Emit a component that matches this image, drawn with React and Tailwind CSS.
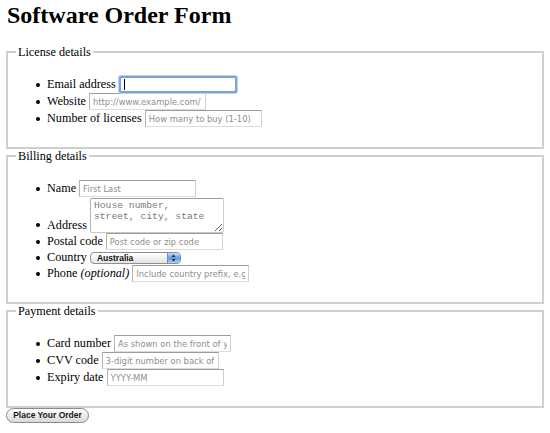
import { useState } from 'react'

const inputCls =
  'w-[117px] h-[17px] ml-[3px] px-[3px] bg-white border border-t-[#9c9c9c] border-l-[#b4b4b4] border-r-[#d0d0d0] border-b-[#dcdcdc] ' +
  "font-['DejaVu_Sans',sans-serif] text-[8.4px] text-black placeholder:text-[#8e8e8e] outline-none"

function Bullet() {
  return <span className="w-[4px] h-[4px] mr-[7px] rounded-full bg-black shrink-0" />
}

function Row({ children, className = 'h-[17px] items-center' }) {
  return (
    <li className={`flex ${className}`}>
      {children}
    </li>
  )
}

function Section({ legend, children }) {
  return (
    <fieldset className="border-2 border-[#cfcfcf] pl-[8px] pr-[8px] pb-[20px]">
      <legend className="px-[2px] leading-[14px]">{legend}</legend>
      <ul className="mt-[17px] pl-[20px]">{children}</ul>
    </fieldset>
  )
}

export default function App() {
  const [country] = useState('Australia')

  return (
    <div className="w-[550px] h-[433px] overflow-hidden bg-white px-[6px] font-['Liberation_Serif',serif] text-[12.2px] text-black">
      <h1 className="text-[24px] leading-[30px] font-bold pl-[1px] mb-[15px]">Software Order Form</h1>

      <form onSubmit={e => e.preventDefault()}>
        {/* License */}
        <Section legend="License details">
          <Row>
            <Bullet />
            <label>Email address</label>
            <span className="relative ml-[3px] flex">
              <input
                className="w-[118px] h-[17px] px-[3px] bg-white border-2 border-[#79a3dd] rounded-[2px] shadow-[0_0_0_1px_#bcd3f2] outline-none text-[8.5px]"
              />
              <span className="absolute left-[5px] top-[3px] w-px h-[11px] bg-black" />
            </span>
          </Row>
          <Row>
            <Bullet />
            <label>Website</label>
            <input className={inputCls} placeholder="http://www.example.com/" />
          </Row>
          <Row>
            <Bullet />
            <label>Number of licenses</label>
            <input className={inputCls} placeholder="How many to buy (1-10)" />
          </Row>
        </Section>

        {/* Billing */}
        <Section legend="Billing details">
          <Row>
            <Bullet />
            <label>Name</label>
            <input className={inputCls} placeholder="First Last" />
          </Row>
          <Row className="h-[36px] items-end">
            <span className="flex items-center h-[14px] mb-[1px]">
              <Bullet />
              <label>Address</label>
            </span>
            <textarea
              className="w-[134px] h-[35px] ml-[3px] pl-[3px] pr-[12px] py-[1px] bg-white border border-t-[#9c9c9c] border-l-[#b4b4b4] border-r-[#d0d0d0] border-b-[#c8c8c8] rounded-[2px] font-['Liberation_Mono',monospace] text-[9.7px] leading-[11px] placeholder:text-[#7a7a7a] outline-none"
              placeholder="House number, street, city, state"
            />
          </Row>
          <Row>
            <Bullet />
            <label>Postal code</label>
            <input className={inputCls} placeholder="Post code or zip code" />
          </Row>
          <Row className="h-[15px] items-center">
            <Bullet />
            <label>Country</label>
            <div className="ml-[3px] w-[91px] h-[12px] flex rounded-[4px] border border-[#8f8f8f] overflow-hidden bg-linear-to-b from-white to-[#e4e4e4]">
              <span className="flex-1 pl-[6px] font-['Liberation_Sans',sans-serif] text-[8.5px] font-bold leading-[10px] text-[#111]">{country}</span>
              <span className="w-[13px] h-full flex items-center justify-center border-l border-[#6b8fc0] bg-linear-to-b from-[#c6defa] via-[#5d9be6] to-[#a9d3fb]">
                <svg width="5" height="8" viewBox="0 0 5 8">
                  <path d="M2.5 0.5 L4.5 3 L0.5 3 Z" fill="#1c2c4a" />
                  <path d="M2.5 7.5 L4.5 5 L0.5 5 Z" fill="#1c2c4a" />
                </svg>
              </span>
            </div>
          </Row>
          <Row>
            <Bullet />
            <label>
              Phone <em>(optional)</em>
            </label>
            <input className={inputCls} placeholder="Include country prefix, e.g. +61" />
          </Row>
        </Section>

        {/* Payment */}
        <Section legend="Payment details">
          <Row>
            <Bullet />
            <label>Card number</label>
            <input className={inputCls} placeholder="As shown on the front of your card" />
          </Row>
          <Row>
            <Bullet />
            <label>CVV code</label>
            <input className={inputCls} placeholder="3-digit number on back of card" />
          </Row>
          <Row>
            <Bullet />
            <label>Expiry date</label>
            <input className={inputCls} placeholder="YYYY-MM" />
          </Row>
        </Section>

        <button
          type="submit"
          className="block w-[83px] h-[15px] rounded-full border border-[#8a8a8a] bg-linear-to-b from-white to-[#d9d9d9] font-['Liberation_Sans',sans-serif] text-[8.5px] font-bold leading-[13px] text-[#1a1a1a]"
        >
          Place Your Order
        </button>
      </form>
    </div>
  )
}
